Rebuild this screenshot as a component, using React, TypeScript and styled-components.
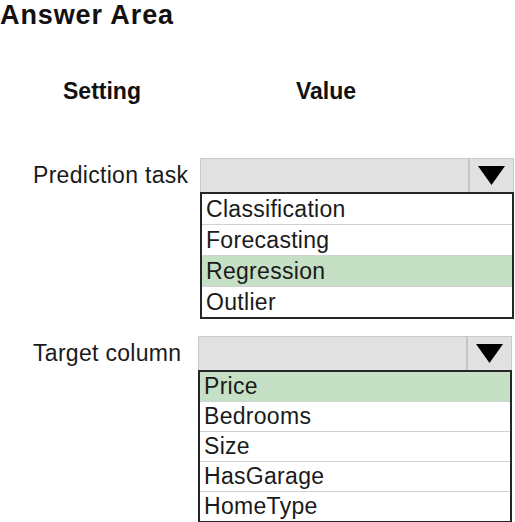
import React from "react";
import styled, { createGlobalStyle } from "styled-components";

const GlobalStyle = createGlobalStyle`
  body {
    margin: 0;
    background: #ffffff;
    font-family: "Liberation Sans", Arial, sans-serif;
    color: #1a1a1a;
  }
`;

const Page = styled.div`
  width: 515px;
  height: 522px;
  overflow: hidden;
`;

const Title = styled.h1`
  margin: 0;
  font-size: 27px;
  line-height: 31px;
  letter-spacing: 0.9px;
  font-weight: bold;
  color: #111;
`;

const Columns = styled.div<{ $top: number }>`
  display: grid;
  grid-template-columns: 200px 315px;
  margin-top: ${(p) => p.$top}px;
`;

const ColumnHead = styled.div<{ $indent: number }>`
  padding-left: ${(p) => p.$indent}px;
  font-size: 23px;
  line-height: 26px;
  font-weight: bold;
  color: #111;
`;

const Label = styled.div`
  padding-left: 33px;
  font-size: 23px;
  letter-spacing: 0.3px;
  line-height: 34px;
`;

const Dropdown = styled.div<{ $shift: number }>`
  margin-left: ${(p) => p.$shift}px;
  width: 314px;
`;

const Header = styled.div`
  display: flex;
  height: 34px;
  box-sizing: border-box;
  background: #e1e1e1;
  border: 1px solid #c9c9c9;
  border-bottom: none;
`;

const HeaderField = styled.div`
  flex: 1;
`;

const ArrowBox = styled.div`
  width: 43px;
  border-left: 2px solid #c4c4c4;
  display: flex;
  align-items: center;
  justify-content: center;
`;

const List = styled.div`
  border: 2px solid #262626;
  background: #fff;
`;

const Option = styled.div<{ $h: number; $selected?: boolean }>`
  height: ${(p) => p.$h}px;
  line-height: ${(p) => p.$h}px;
  padding-left: 4px;
  font-size: 23px;
  letter-spacing: 0.3px;
  background: ${(p) => (p.$selected ? "#c5e0c4" : "#fff")};
  & + & {
    border-top: 1px solid #d2d2d2;
  }
`;

const Arrow = () => (
  <svg width="27" height="19" viewBox="0 0 27 19">
    <polygon points="0,0 27,0 13.5,19" fill="#000" />
  </svg>
);

interface SelectProps {
  options: string[];
  selected: string;
  rowHeight: number;
  shift: number;
}

const Select = ({ options, selected, rowHeight, shift }: SelectProps) => (
  <Dropdown $shift={shift}>
    <Header>
      <HeaderField />
      <ArrowBox>
        <Arrow />
      </ArrowBox>
    </Header>
    <List>
      {options.map((o) => (
        <Option key={o} $h={rowHeight} $selected={o === selected}>
          {o}
        </Option>
      ))}
    </List>
  </Dropdown>
);

export default function App() {
  return (
    <Page>
      <GlobalStyle />
      <Title>Answer Area</Title>
      <Columns $top={47}>
        <ColumnHead $indent={63}>Setting</ColumnHead>
        <ColumnHead $indent={96}>Value</ColumnHead>
      </Columns>
      <Columns $top={54}>
        <Label>Prediction task</Label>
        <Select
          options={["Classification", "Forecasting", "Regression", "Outlier"]}
          selected="Regression"
          rowHeight={30}
          shift={0}
        />
      </Columns>
      <Columns $top={17}>
        <Label>Target column</Label>
        <Select
          options={["Price", "Bedrooms", "Size", "HasGarage", "HomeType"]}
          selected="Price"
          rowHeight={29}
          shift={-2}
        />
      </Columns>
    </Page>
  );
}
